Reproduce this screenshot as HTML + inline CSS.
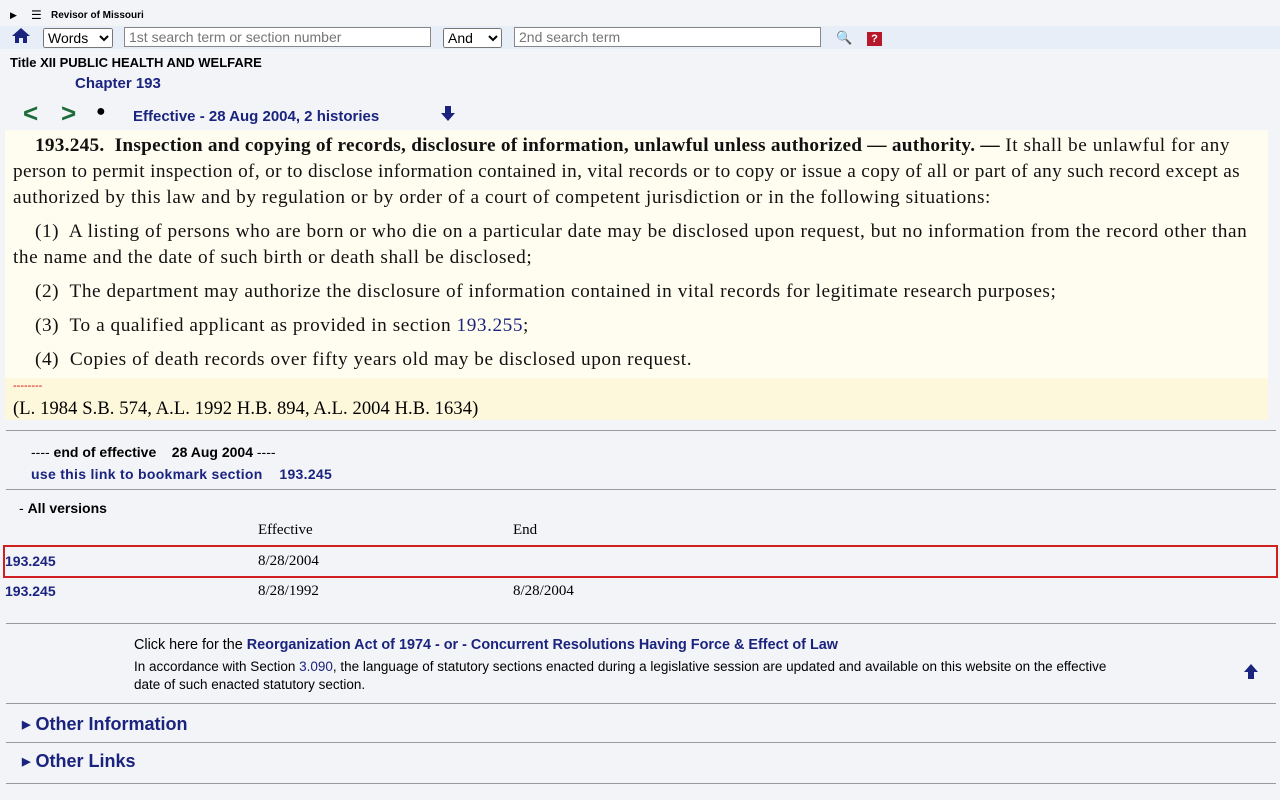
<!DOCTYPE html>
<html><head><meta charset="utf-8"><style>
body{margin:0;background:#f3f4f8;font-family:"Liberation Sans",sans-serif;width:1280px;height:800px;overflow:hidden;position:relative}
.a{position:absolute}
.blue{color:#1a237e}
.serif{font-family:"Liberation Serif",serif}
input,select{font-family:"Liberation Sans",sans-serif;font-size:14px}
.hr{position:absolute;left:6px;right:4px;height:0;border-top:1px solid #9a9a9a}
.nw{white-space:nowrap}
</style></head><body>
<div class="a" style="left:10px;top:10px;font-size:9px">▶</div>
<div class="a" style="left:31px;top:8px;font-size:12px">☰</div>
<div class="a" style="left:51px;top:10px;font-size:10px;font-weight:bold">Revisor of Missouri</div>
<div class="a" style="left:0;top:26px;width:1280px;height:23px;background:#e8eef8"></div>
<svg class="a" style="left:11px;top:27px" width="20" height="17" viewBox="0 0 20 17"><path d="M10 1L1 9h3v7h4v-5h4v5h4V9h3z" fill="#1a237e"/></svg>
<select class="a" style="left:43px;top:28px;width:70px;height:20px;padding:0"><option>Words</option></select>
<input class="a" style="left:124px;top:27px;width:297px;height:16px;padding:1px 4px;border:1px solid #888" placeholder="1st search term or section number">
<select class="a" style="left:443px;top:28px;width:59px;height:20px;padding:0"><option>And</option></select>
<input class="a" style="left:514px;top:27px;width:297px;height:16px;padding:1px 4px;border:1px solid #888" placeholder="2nd search term">
<div class="a" style="left:836px;top:30px;font-size:13px">🔍</div>
<div class="a" style="left:867px;top:32px;width:15px;height:14px;background:#b5192a;color:#fff;font-size:11px;font-weight:bold;text-align:center;line-height:14px">?</div>
<div class="a" style="left:10px;top:55px;font-size:13px;font-weight:bold">Title XII PUBLIC HEALTH AND WELFARE</div>
<div class="a blue" style="left:75px;top:75px;font-size:15px;font-weight:bold">Chapter 193</div>
<div class="a" style="left:23px;top:98px;font-size:26px;font-weight:bold;color:#1e6b3a">&lt;</div>
<div class="a" style="left:61px;top:98px;font-size:26px;font-weight:bold;color:#1e6b3a">&gt;</div>
<div class="a" style="left:96px;top:103px;font-size:16px">●</div>
<div class="a blue" style="left:133px;top:108px;font-size:15px;font-weight:bold">Effective - 28 Aug 2004, 2 histories</div>
<svg class="a" style="left:440px;top:105px" width="16" height="17" viewBox="0 0 16 17"><path d="M5 1h6v7h4L8 16 1 8h4z" fill="#1a237e"/></svg>
<div class="a serif" style="left:5px;top:130px;width:1263px;height:290px;background:#fffdf0"></div>
<div class="a" style="left:5px;top:378px;width:1263px;height:42px;background:#fdf7dc"></div>
<div class="a serif" style="left:13px;top:133px;width:1252px;font-size:19.3px;letter-spacing:0.55px;line-height:26px;color:#111">
<p style="margin:0;text-indent:22px" class="nw"><b style="letter-spacing:0.25px">193.245.&nbsp; Inspection and copying of records, disclosure of information, unlawful unless authorized — authority. —</b> It shall be unlawful for any<br><span style="letter-spacing:0.35px">person to permit inspection of, or to disclose information contained in, vital records or to copy or issue a copy of all or part of any such record except as</span><br>authorized by this law and by regulation or by order of a court of competent jurisdiction or in the following situations:</p>
<p style="margin:8px 0 0;text-indent:22px">(1)&nbsp; A listing of persons who are born or who die on a particular date may be disclosed upon request, but no information from the record other than the name and the date of such birth or death shall be disclosed;</p>
<p style="margin:8px 0 0;text-indent:22px">(2)&nbsp; The department may authorize the disclosure of information contained in vital records for legitimate research purposes;</p>
<p style="margin:8px 0 0;text-indent:22px">(3)&nbsp; To a qualified applicant as provided in section <span class="blue">193.255</span>;</p>
<p style="margin:8px 0 0;text-indent:22px">(4)&nbsp; Copies of death records over fifty years old may be disclosed upon request.</p>
</div>
<div class="a" style="left:13px;top:380px;font-size:11px;color:#d00">--------</div>
<div class="a serif" style="left:13px;top:399px;font-size:18.5px;letter-spacing:0.1px">(L. 1984 S.B. 574, A.L. 1992 H.B. 894, A.L. 2004 H.B. 1634)</div>
<div class="hr" style="top:430px"></div>
<div class="a" style="left:31px;top:444px;font-size:14px">---- <b>end of effective &nbsp;&nbsp; 28 Aug 2004</b> ----</div>
<div class="a blue" style="left:31px;top:466px;font-size:14px;font-weight:bold;letter-spacing:0.3px">use this link to bookmark section &nbsp;&nbsp; 193.245</div>
<div class="hr" style="top:489px"></div>
<div class="a" style="left:19px;top:500px;font-size:14px">- <b>All versions</b></div>
<div class="a serif" style="left:258px;top:522px;font-size:15px">Effective</div>
<div class="a serif" style="left:513px;top:522px;font-size:15px">End</div>
<div class="a" style="left:3px;top:545px;width:1271px;height:29px;border:2px solid #d01f1f"></div>
<div class="a blue" style="left:5px;top:553px;font-size:14px;font-weight:bold">193.245</div>
<div class="a serif" style="left:258px;top:553px;font-size:15px">8/28/2004</div>
<div class="a blue" style="left:5px;top:583px;font-size:14px;font-weight:bold">193.245</div>
<div class="a serif" style="left:258px;top:583px;font-size:15px">8/28/1992</div>
<div class="a serif" style="left:513px;top:583px;font-size:15px">8/28/2004</div>
<div class="hr" style="top:623px"></div>
<div class="a" style="left:134px;top:637px;font-size:14.4px">Click here for the <b class="blue">Reorganization Act of 1974 - or - Concurrent Resolutions Having Force &amp; Effect of Law</b></div>
<div class="a nw" style="left:134px;top:658px;font-size:13.5px;line-height:18px">In accordance with Section <span class="blue">3.090</span>, the language of statutory sections enacted during a legislative session are updated and available on this website on the effective<br>date of such enacted statutory section.</div>
<svg class="a" style="left:1243px;top:664px" width="16" height="16" viewBox="0 0 16 16"><path d="M8 0l7 8h-4v7H5V8H1z" fill="#1a237e"/></svg>
<div class="hr" style="top:703px"></div>
<div class="a blue" style="left:22px;top:714px;font-size:18px;font-weight:bold"><span style="font-size:11px;vertical-align:2px">▶</span>&nbsp;Other Information</div>
<div class="hr" style="top:742px"></div>
<div class="a blue" style="left:22px;top:751px;font-size:18px;font-weight:bold"><span style="font-size:11px;vertical-align:2px">▶</span>&nbsp;Other Links</div>
<div class="hr" style="top:783px"></div>
</body></html>
